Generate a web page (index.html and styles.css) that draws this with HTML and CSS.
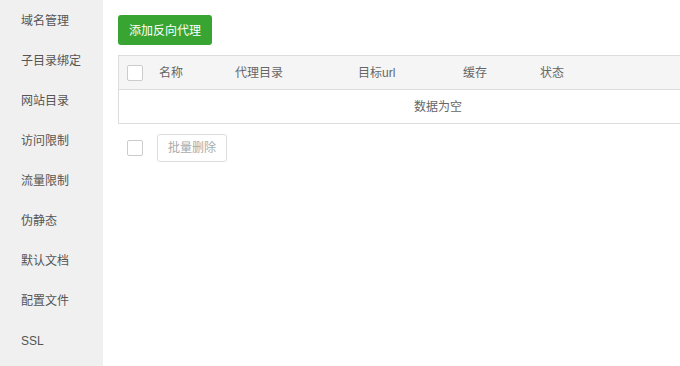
FILE: index.html
```html
<!DOCTYPE html>
<html lang="zh-CN">
<head>
<meta charset="utf-8">
<title>反向代理</title>
<link rel="stylesheet" href="styles.css">
</head>
<body>
<div class="page">
  <ul class="menu">
    <li>域名管理</li>
    <li>子目录绑定</li>
    <li>网站目录</li>
    <li>访问限制</li>
    <li>流量限制</li>
    <li>伪静态</li>
    <li>默认文档</li>
    <li>配置文件</li>
    <li>SSL</li>
  </ul>
  <div class="content">
    <button class="btn-add">添加反向代理</button>
    <div class="table">
      <div class="row head">
        <div class="cell check-cell"><span class="check"></span></div>
        <div class="cell">名称</div>
        <div class="cell">代理目录</div>
        <div class="cell">目标url</div>
        <div class="cell">缓存</div>
        <div class="cell">状态</div>
      </div>
      <div class="empty">数据为空</div>
    </div>
    <div class="footer">
      <span class="check"></span>
      <button class="btn-del">批量删除</button>
    </div>
  </div>
</div>
</body>
</html>
```
FILE: styles.css
```css
html, body {
  margin: 0;
  padding: 0;
  background: #fff;
  font-family: "Liberation Sans", "Noto Sans CJK SC", sans-serif;
  font-size: 12px;
  color: #555;
  overflow: hidden;
}
.page {
  display: flex;
  width: 680px;
  height: 366px;
}
.menu {
  list-style: none;
  margin: 0;
  padding: 0;
  width: 103px;
  flex: none;
  background: #f0f0f0;
}
.menu li {
  height: 40px;
  line-height: 38px;
  padding-top: 2px;
  box-sizing: border-box;
  padding-left: 21px;
  color: #555;
}
.content {
  flex: 1;
  min-width: 0;
  overflow: hidden;
  padding: 15px 0 0 15px;
}
.btn-add {
  display: block;
  height: 30px;
  padding: 2px 11px 0;
  border: none;
  border-radius: 3px;
  background: #38a533;
  color: #fff;
  font-family: inherit;
  font-size: 12px;
  line-height: 28px;
  cursor: pointer;
}
.table {
  margin-top: 10px;
  width: 638px;
  border: 1px solid #ddd;
}
.row {
  display: grid;
  grid-template-columns: 40px 76px 123px 105px 77px 1fr;
  height: 33px;
  align-items: center;
}
.head {
  background: #f5f5f5;
  border-bottom: 1px solid #ddd;
  color: #666;
}
.cell {
  line-height: 31px;
  padding-top: 2px;
}
.check-cell {
  padding-top: 0;
  padding-left: 8px;
  display: flex;
  align-items: center;
}
.check {
  display: inline-block;
  width: 14px;
  height: 14px;
  border: 1px solid #ccc;
  border-radius: 2px;
  background: #fff;
  flex: none;
}
.empty {
  height: 33px;
  line-height: 31px;
  padding-top: 2px;
  box-sizing: border-box;
  text-align: center;
  color: #666;
}
.footer {
  margin-top: 10px;
  padding-left: 9px;
  display: flex;
  align-items: center;
  gap: 14px;
}
.btn-del {
  height: 28px;
  padding: 1px 10px 0;
  border: 1px solid #ddd;
  border-radius: 3px;
  background: #fff;
  color: #aaa;
  font-family: inherit;
  font-size: 12px;
  line-height: 25px;
}
```
